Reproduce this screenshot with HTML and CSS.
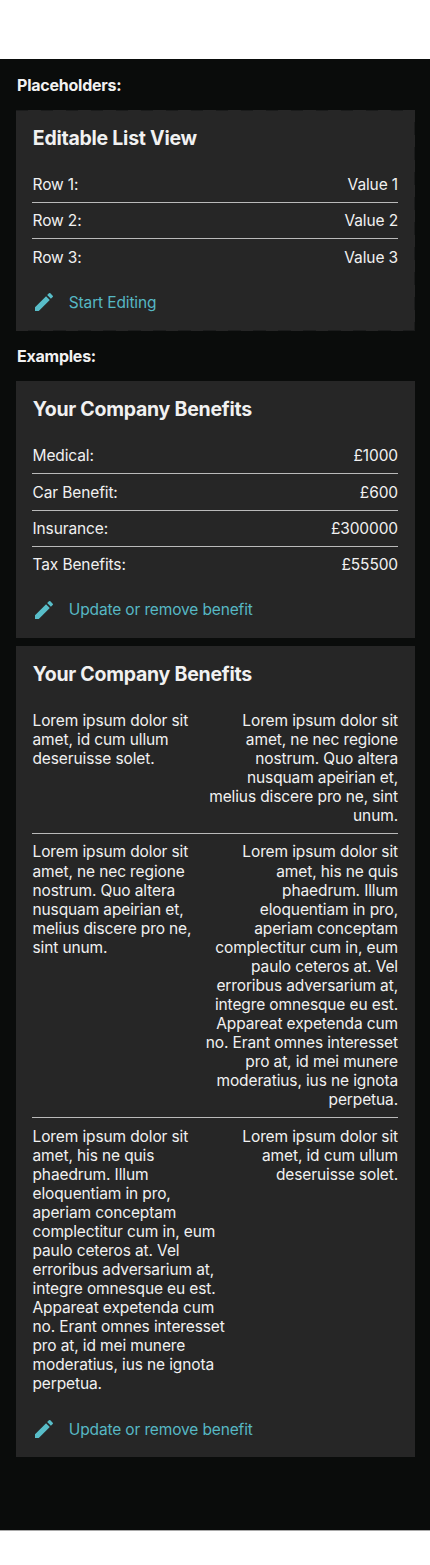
FILE: index.html
```
<!DOCTYPE html>
<html lang="en">
<head>
<meta charset="utf-8">
<title>Editable List View</title>
<link rel="stylesheet" href="styles.css">
</head>
<body>
<main class="screen">
  <h2 class="label">Placeholders:</h2>
  <section class="card dashed">
    <h3 class="title">Editable List View</h3>
    <dl class="rows">
      <div class="row"><dt>Row 1:</dt><dd>Value 1</dd></div>
      <div class="row"><dt>Row 2:</dt><dd>Value 2</dd></div>
      <div class="row"><dt>Row 3:</dt><dd>Value 3</dd></div>
    </dl>
    <a class="action"><svg class="icon" viewBox="0 0 24 24"><path d="M3 17.25V21h3.75L17.81 9.94l-3.75-3.75L3 17.25zM20.71 7.04a1 1 0 0 0 0-1.41l-2.34-2.34a1 1 0 0 0-1.41 0l-1.83 1.83 3.75 3.75 1.83-1.83z"/></svg><span>Start Editing</span></a>
  </section>
  <h2 class="label examples">Examples:</h2>
  <section class="card">
    <h3 class="title">Your Company Benefits</h3>
    <dl class="rows">
      <div class="row"><dt>Medical:</dt><dd>£1000</dd></div>
      <div class="row"><dt>Car Benefit:</dt><dd>£600</dd></div>
      <div class="row"><dt>Insurance:</dt><dd>£300000</dd></div>
      <div class="row"><dt>Tax Benefits:</dt><dd>£55500</dd></div>
    </dl>
    <a class="action"><svg class="icon" viewBox="0 0 24 24"><path d="M3 17.25V21h3.75L17.81 9.94l-3.75-3.75L3 17.25zM20.71 7.04a1 1 0 0 0 0-1.41l-2.34-2.34a1 1 0 0 0-1.41 0l-1.83 1.83 3.75 3.75 1.83-1.83z"/></svg><span>Update or remove benefit</span></a>
  </section>
  <section class="card next">
    <h3 class="title">Your Company Benefits</h3>
    <dl class="rows">
      <div class="row">
        <dt>Lorem ipsum dolor sit<br>amet, id cum ullum<br>deseruisse solet.</dt>
        <dd>Lorem ipsum dolor sit<br>amet, ne nec regione<br>nostrum. Quo altera<br>nusquam apeirian et,<br>melius discere pro ne, sint<br>unum.</dd>
      </div>
      <div class="row">
        <dt>Lorem ipsum dolor sit<br>amet, ne nec regione<br>nostrum. Quo altera<br>nusquam apeirian et,<br>melius discere pro ne,<br>sint unum.</dt>
        <dd>Lorem ipsum dolor sit<br>amet, his ne quis<br>phaedrum. Illum<br>eloquentiam in pro,<br>aperiam conceptam<br>complectitur cum in, eum<br>paulo ceteros at. Vel<br>erroribus adversarium at,<br>integre omnesque eu est.<br>Appareat expetenda cum<br>no. Erant omnes interesset<br>pro at, id mei munere<br>moderatius, ius ne ignota<br>perpetua.</dd>
      </div>
      <div class="row">
        <dt>Lorem ipsum dolor sit<br>amet, his ne quis<br>phaedrum. Illum<br>eloquentiam in pro,<br>aperiam conceptam<br>complectitur cum in, eum<br>paulo ceteros at. Vel<br>erroribus adversarium at,<br>integre omnesque eu est.<br>Appareat expetenda cum<br>no. Erant omnes interesset<br>pro at, id mei munere<br>moderatius, ius ne ignota<br>perpetua.</dt>
        <dd>Lorem ipsum dolor sit<br>amet, id cum ullum<br>deseruisse solet.</dd>
      </div>
    </dl>
    <a class="action"><svg class="icon" viewBox="0 0 24 24"><path d="M3 17.25V21h3.75L17.81 9.94l-3.75-3.75L3 17.25zM20.71 7.04a1 1 0 0 0 0-1.41l-2.34-2.34a1 1 0 0 0-1.41 0l-1.83 1.83 3.75 3.75 1.83-1.83z"/></svg><span>Update or remove benefit</span></a>
  </section>
</main>
</body>
</html>
```
FILE: styles.css
```
* { box-sizing: border-box; margin: 0; padding: 0; }
body { background: #fff; padding-top: 59px; height: 1565px; font-family: Inter, "Liberation Sans", sans-serif; color: #f1f1f1; }
.screen { background: #0a0c0b; height: 1472px; padding: 16px; border-bottom: 1px solid #a9a9a9; display: flex; flex-direction: column; }
.label { font-size: 16px; font-weight: 700; line-height: 20px; margin: 0 0 15.3px 1px; letter-spacing: -.24px; }
.examples { margin-top: 15.5px; }
.card { background: #262626; padding: 16px 16.6px 16.3px 16px; flex: none; width: 398.6px; }
.dashed {
  background:
    repeating-linear-gradient(90deg, #1b1c1c 0 12.5px, transparent 12.5px 25px) top / 100% 1px no-repeat,
    repeating-linear-gradient(90deg, transparent 0 12.5px, #1b1c1c 12.5px 25px) bottom / 100% 1px no-repeat,
    repeating-linear-gradient(180deg, transparent 0 12.5px, #1b1c1c 12.5px 25px) right / 1px 100% no-repeat,
    #262626;
}
.next { margin-top: 8px; }
.title { font-size: 19.5px; font-weight: 700; line-height: 24px; letter-spacing: -.25px; margin: 0 0 16.65px .8px; }
.row { display: flex; justify-content: space-between; align-items: flex-start; padding: 8.2px 0 8px; border-bottom: 1px solid #bababa; font-size: 15.5px; letter-spacing: -.12px; line-height: 19.07px; white-space: nowrap; }
.row:last-child { border-bottom: 0; }
.row dt { padding-left: .5px; }
.row dd { text-align: right; }
.action { display: flex; align-items: center; height: 24px; margin-top: 15.7px; color: #56b8c4; font-size: 15.5px; letter-spacing: -.14px; }
.icon { width: 24px; height: 24px; fill: #58bdc8; margin-right: 12.8px; }
```
